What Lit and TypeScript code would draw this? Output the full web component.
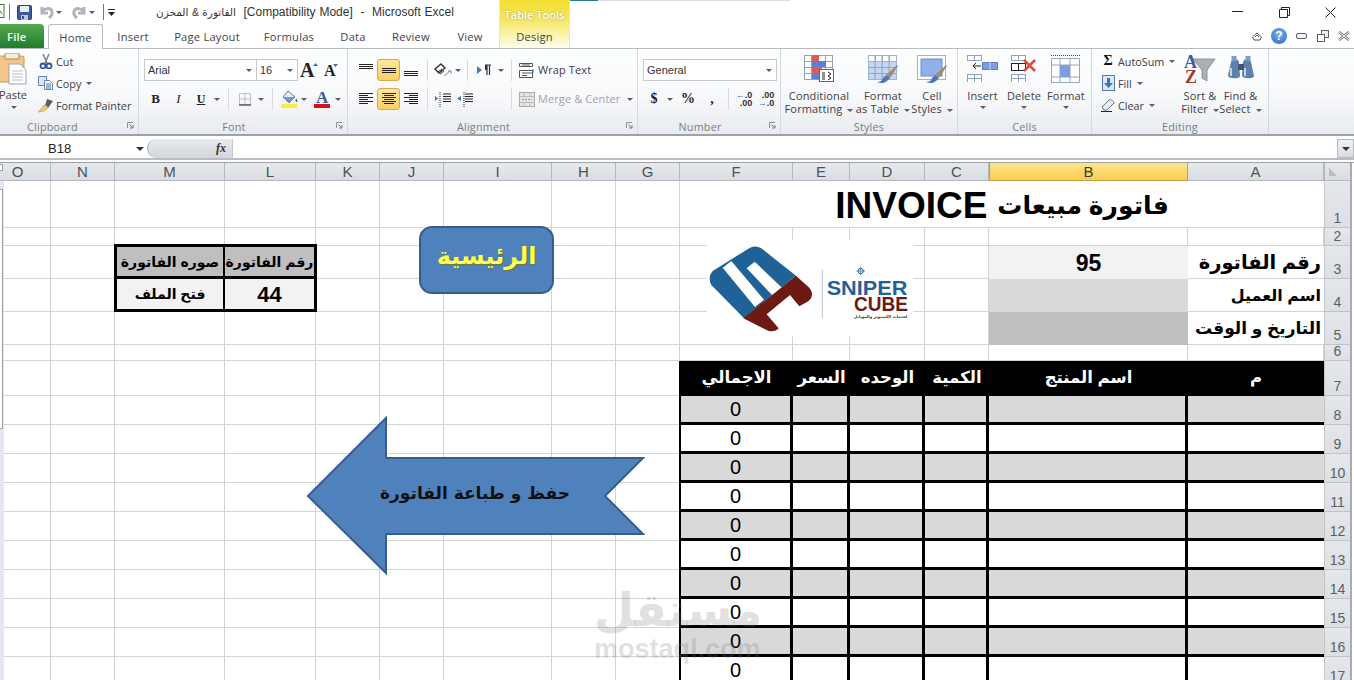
import { LitElement, html, css, svg } from "lit";
import { customElement } from "lit/decorators.js";

const COLS: [string, number][] = [["O",51],["N",64],["M",110],["L",91],["K",64],["J",64],["I",108],["H",64],["G",64],["F",113],["E",57],["D",75],["C",64],["B",199],["A",136]];
const ROWS: number[] = [47,18,33,33,33,16,35,29,29,29,29,29,29,29,29,29,29];
const TABLE = ["F","E","D","C","B","A"];
const HEADS: Record<string,string> = {F:"الاجمالي",E:"السعر",D:"الوحده",C:"الكمية",B:"اسم المنتج",A:"م"};

const ic = (w:number,h:number,body:unknown)=>html`<svg width=${w} height=${h} viewBox="0 0 ${w} ${h}">${body}</svg>`;
const caret = html`<span class="caret"></span>`;
const lines = (ys:number[],xs:[number,number][])=>ys.map((y,i)=>svg`<rect x=${xs[i%xs.length][0]} y=${y} width=${xs[i%xs.length][1]} height="1" fill="#222"/>`);

const grid16 = (x:number,y:number,w:number,h:number,cx:number,cy:number,stroke="#8ea3bc")=>{
  const o:unknown[]=[svg`<rect x=${x+.5} y=${y+.5} width=${w} height=${h} fill="#fff" stroke=${stroke}/>`];
  for(let i=1;i<cx;i++) o.push(svg`<path d="M${x+.5+i*w/cx} ${y}v${h}" stroke=${stroke}/>`);
  for(let i=1;i<cy;i++) o.push(svg`<path d="M${x} ${y+.5+i*h/cy}h${w}" stroke=${stroke}/>`);
  return o;
};
const brush = (dx:number,dy:number)=>svg`<g transform="translate(${dx} ${dy})"><path d="M0 17c3 0 5-1 6-4l3-3 4 3-3 3c-2 2-6 3-10 1z" fill="#4a78b8"/><path d="M9 10L20 0l1 1-8 12z" fill="#a08c70"/></g>`;

const I = {
  excel: ic(6,14,svg`<rect x="-6" y=".5" width="10" height="13" fill="#fff" stroke="#2e7d3c"/><path d="M-2 4l4 6" stroke="#2e7d3c"/>`),
  save: ic(15,15,svg`<rect x=".5" y=".5" width="14" height="14" rx="1" fill="#3d5a9c" stroke="#2a3f78"/><rect x="3" y="1" width="9" height="6" fill="#e8eef8"/><rect x="4" y="10" width="7" height="5" fill="#bcc6d8"/><rect x="5" y="11" width="2" height="3" fill="#34508c"/>`),
  undo: ic(14,14,svg`<path d="M2 2v6h6M2 7.500c2-5 9-5 10-1 .6 2.500-1 5-3 6.500" fill="none" stroke="#aeb5c0" stroke-width="3"/>`),
  redo: ic(14,14,svg`<path d="M12 2v6H6M12 7.500C10 2.500 3 2.500 2 6.500c-.6 2.500 1 5 3 6.500" fill="none" stroke="#aeb5c0" stroke-width="3"/>`),
  custom: ic(8,9,svg`<rect y="1" width="7" height="1" fill="#222"/><path d="M0 4h7L3.500 8z" fill="#222"/>`),
  paste: ic(28,32,svg`<rect x="-4" y="3" width="28" height="26" rx="2" fill="#f3c586" stroke="#c89a5a"/><rect x="5" y="0" width="14" height="6" rx="1" fill="#fbeecf" stroke="#9a8a70"/><path d="M9 11h11l6 6v14H9z" fill="#fff" stroke="#9fa6b0"/><path d="M12 18h11M12 21h11M12 24h11M12 27h11" stroke="#b8bec8"/>`),
  cut: ic(14,15,svg`<path d="M4 0l4 9M10 0L6 9" stroke="#7b8088" stroke-width="1.500"/><circle cx="4" cy="12" r="2.500" fill="none" stroke="#3057a5" stroke-width="1.800"/><circle cx="10" cy="12" r="2.500" fill="none" stroke="#3057a5" stroke-width="1.800"/>`),
  copy: ic(16,14,svg`<path d="M.5 .5h8v9h-8z" fill="#dce8f6" stroke="#5f85b3"/><path d="M6.500 4.500h5l3 3v6h-8z" fill="#fff" stroke="#5f85b3"/><path d="M8 8h5M8 10h5M8 12h5" stroke="#3c6ea8"/>`),
  painter: ic(16,15,svg`<path d="M9 1l6 2-5 7-3-2z" fill="#5a5f68"/><path d="M7 7l3 2c-1 3-5 5-10 5 3-2 4-6 7-7z" fill="#eecb6e" stroke="#b99739" stroke-width=".6"/>`),
  launcher: ic(7,7,svg`<path d="M.5 6V.5H6" fill="none" stroke="#8d939b"/><path d="M2.500 2.500l3 3M6 3v3H3" fill="none" stroke="#717780"/>`),
  grow: ic(18,16,svg`<text x="0" y="15" class="az gr" fill="#222">A</text><path d="M13 4l2.500-3L18 4z" fill="#3f6fa8"/>`),
  shrink: ic(16,14,svg`<text x="1" y="13" class="az shr" fill="#222">A</text><path d="M10 1h5l-2.500 3z" fill="#3f6fa8"/>`),
  bold: html`<b class="fb">B</b>`,
  ital: html`<i class="fi">I</i>`,
  under: html`<span class="fu">U</span>`,
  border: ic(14,14,svg`<path d="M1.500 1.500h11v11h-11zM7 1.500v11M1.500 7h11" fill="none" stroke="#8b8f96" stroke-dasharray="1 1"/><path d="M1 13h12" stroke="#222"/>`),
  fill: ic(18,18,svg`<path d="M8 1l7 6-6 6-6-6z" fill="#e5edf6" stroke="#5a7da6"/><path d="M3 7l6 6 6-6z" fill="#7398c6"/><path d="M16 8c1 2 2 3 1 4s-2-1-1-4z" fill="#4b6a96"/><rect x="1" y="14" width="16" height="4" fill="#f4f03c"/>`),
  color: ic(16,18,svg`<text x="2" y="13" class="az cl" fill="#3b5998">A</text><rect y="14" width="16" height="4" fill="#d3121c"/>`),
  atop: ic(14,20,svg`${lines([4,6,8],[[0,14]])}`),
  amid: ic(14,20,svg`${lines([8,10,12],[[0,14]])}`),
  abot: ic(14,20,svg`${lines([11,13,15],[[0,14]])}`),
  left: ic(14,12,svg`${lines([0,2,4,6,8,10],[[0,14],[0,9]])}`),
  center: ic(14,12,svg`${lines([0,2,4,6,8,10],[[0,14],[2,10]])}`),
  right: ic(14,12,svg`${lines([0,2,4,6,8,10],[[0,14],[5,9]])}`),
  orient: ic(18,15,svg`<path d="M1 6l6-5 4 4-6 5z" fill="none" stroke="#333" stroke-width="1.400"/><path d="M4 9l4-3M6 11l4-3" stroke="#333"/><path d="M10 13l6-5" stroke="#7d8b9c"/><path d="M14 8h3v3" fill="none" stroke="#7d8b9c"/>`),
  rtl: ic(14,12,svg`<path d="M0 2l5 4-5 4z" fill="#4a7cb5"/><path d="M8 1h6M10 1v10M12.500 1v10" stroke="#333" stroke-width="1.200"/><path d="M8 1h2v5H8z" fill="#333"/>`),
  indL: ic(16,16,svg`<path d="M8 3h8M8 5.500h8M8 8h8M8 10.500h8" stroke="#222"/><path d="M5 1v15" stroke="#222" stroke-dasharray="1 1"/><path d="M0 5l3 2.500L0 10z" fill="#3b76bd"/>`),
  indR: ic(16,16,svg`<path d="M8 3h8M8 5.500h8M8 8h8M8 10.500h8" stroke="#222"/><path d="M7 1v15" stroke="#222" stroke-dasharray="1 1"/><path d="M4 5L0 7.500 4 10z" fill="#3b76bd"/>`),
  wrap: ic(16,15,svg`<path d="M.5 .5h13v3H.5zM.5 7.500h13v7H.5z" fill="#fff" stroke="#555"/><path d="M3 2h8M3 10h8M3 12.500h5" stroke="#555"/><path d="M14 6v4h-3" fill="none" stroke="#3c6ea8"/>`),
  merge: ic(16,15,svg`<rect x=".5" y=".5" width="15" height="14" fill="#e6e6e6" stroke="#aaa"/><path d="M.5 4.500h15M.5 10.500h15M5 .5v4M11 .5v4M5 10.500v4M11 10.500v4" stroke="#bbb"/><path d="M3 7.500h10" stroke="#999" stroke-dasharray="2 1"/>`),
  dec1: html`<span class="dec"><span><span class="arrow">←</span>.0</span><span>.00</span></span>`,
  dec2: html`<span class="dec"><span>.00</span><span><span class="arrow">→</span>.0</span></span>`,
  cond: ic(30,27,svg`${grid16(0,0,28,24,4,4)}<rect x="8" y="0" width="7" height="6" fill="#e45a50"/><rect x="8" y="6" width="14" height="6" fill="#5b80d8"/><rect x="8" y="12" width="10" height="6" fill="#e45a50"/><rect x="8" y="18" width="7" height="6" fill="#5b80d8"/><rect x="15.500" y="14.500" width="14" height="12" fill="#fff" stroke="#666"/><path d="M18 18h3M18 20h3M18 22h3M18 24h3M24 17l3 2-3 2M24 21l3 2-3 2" stroke="#222" fill="none"/>`),
  table: ic(30,30,svg`${grid16(0,0,28,24,4,4,"#9db4d2")}<rect x="1" y="7" width="27" height="17" fill="#b9cdf0" opacity=".8"/><path d="M7 .5v24M14 .5v24M21 .5v24M0 12.500h28M0 18.500h28" stroke="#8fa6c6"/>${brush(9,10)}`),
  cstyle: ic(30,30,svg`<rect x=".5" y=".5" width="28" height="24" fill="#fff" stroke="#9db4d2"/><rect x="4" y="4" width="21" height="17" fill="#8fb0ea" stroke="#6d8fd0"/>${brush(9,10)}`),
  ins: ic(31,27,svg`${grid16(0,0,14,5,2,1)}${grid16(0,19,14,8,2,2)}<rect x="15.500" y="7.500" width="15" height="7" fill="#7b9de0" stroke="#5f7fbf"/><path d="M23 7v8" stroke="#c9d6ef"/><path d="M6 11h8M6 11l3-3M6 11l3 3" stroke="#222" fill="none"/>`),
  del: ic(26,27,svg`${grid16(0,0,14,5,2,1)}${grid16(0,8,14,7,2,1,"#222")}${grid16(0,19,14,8,2,2)}<path d="M13 5l11 11M24 5L13 16" stroke="#e04a38" stroke-width="2.500"/>`),
  fmt: ic(30,30,svg`<path d="M0 .5h30" stroke="#444" stroke-dasharray="1 1"/><path d="M.5 3.500h28v24h-28z" fill="#fff" stroke="#9aa6b2"/><path d="M9 3v25M19 3v25M0 10h28M0 22h28" stroke="#9aa6b2"/><rect x="9" y="10" width="10" height="12" fill="#7d9fe2"/>`),
  sigma: html`<span class="sig">Σ</span>`,
  fillI: ic(13,16,svg`<rect x=".5" y=".5" width="12" height="15" fill="#dbe8f8" stroke="#4f7cb5"/><path d="M5 3h3v5h3l-4.500 5L2 8h3z" fill="#3f74c0"/>`),
  clear: ic(15,14,svg`<path d="M1 9l7-7c2-1 5 1 5 3l-7 7H3z" fill="#e8edf2" stroke="#6a7480"/><path d="M0 13.500h11" stroke="#222"/>`),
  sort: ic(32,28,svg`<path d="M9 4h22l-8 11v11l-5-3v-8z" fill="#aab0b6" stroke="#8d9298"/><text x="0" y="13" class="az so" fill="#3a5ea8">A</text><text x="1" y="28" class="az so" fill="#a03a2a">Z</text>`),
  find: ic(28,26,svg`<path d="M4 7c1-4 7-4 8 0l1 14c0 3-11 3-12 0z" fill="#5e80ad"/><path d="M16 7c1-4 7-4 8 0l3 14c0 3-11 3-12 0z" fill="#5e80ad"/><rect x="11" y="9" width="6" height="6" fill="#3b5782"/><rect x="4.500" y="1" width="5" height="5" fill="#7f9cc2"/><rect x="18.500" y="1" width="5" height="5" fill="#7f9cc2"/><path d="M4 13v8M18 13v8" stroke="#c8d6e8" stroke-width="2"/>`),
  chev: ic(10,9,svg`<path d="M.5 5L5 1l4.500 4-1.500 3H2z" fill="none" stroke="#555"/><path d="M3 5l2-2 2 2" fill="none" stroke="#555"/>`),
  help: html`<span class="help">?</span>`,
  wmin: ic(11,6,svg`<rect x=".5" y=".5" width="10" height="5" rx="1.500" fill="#f5f6f8" stroke="#56606c"/>`),
  wres: ic(12,12,svg`<rect x="4.500" y=".5" width="7" height="7" fill="#eef1f5" stroke="#56606c"/><rect x=".5" y="4.500" width="7" height="7" fill="#fff" stroke="#56606c"/>`),
  wcls: ic(12,10,svg`<path d="M1 1l10 8M11 1L1 9" stroke="#6a737d" stroke-width="2.600"/><path d="M1 1l10 8M11 1L1 9" stroke="#fff"/>`),
};

const logo = html`<svg width="220" height="105" viewBox="0 0 660 315">
  <rect width="620" height="290" x="20" y="15" fill="#fff"/>
  <path d="M38 108L150 38q18-8 34 2l104 82-156 128L34 150q-12-24 4-42z" fill="#1f6297"/>
  <path d="M68 98l26-20 98 116-27 22zM140 100l24-20 82 78-30 22z" fill="#fff"/>
  <path d="M288 122l40 36q18 22-2 40l-28 16-28-34-70 58 36 42q-10 12-30 8l-76-38z" fill="#6d1a12"/>
  <path d="M367 105v145" stroke="#8ea8c0" stroke-width="2"/>
  <text x="380" y="180" class="lg" fill="#1f6297" textLength="242" lengthAdjust="spacingAndGlyphs">SNIPER</text>
  <text x="462" y="228" class="lg" fill="#6d1a12" textLength="162" lengthAdjust="spacingAndGlyphs">CUBE</text>
  <text x="622" y="250" class="lgs" text-anchor="end" fill="#333">لخدمات الكمبيوتر والموبايل</text>
  <circle cx="482" cy="108" r="8" fill="none" stroke="#1f6297" stroke-width="3"/><path d="M482 95v26M469 108h26" stroke="#1f6297" stroke-width="2"/>
</svg>`;

@customElement("app-root")
export class AppRoot extends LitElement {
  static styles = css`
    :host{display:block;width:1354px;height:680px;overflow:hidden;position:relative;background:#fff;font-family:"Open Sans","Liberation Sans",sans-serif;font-size:11px;color:#3c4046}
    *{box-sizing:border-box}
    .title{height:24px;display:grid;grid-template-columns:6px 6px 24px 4px 14px 10px 8px 14px 12px 10px 8px 40px 1fr;align-items:center;position:relative}
    .qsep{width:1px;height:16px;background:#777;justify-self:center}
    .qc{display:flex;justify-content:center}
    .ttl{font-family:"Liberation Sans","DejaVu Sans",sans-serif;font-size:12px;color:#333;white-space:pre;word-spacing:.5px}
    .ttl .ar{font-size:10.500px}
    .wbtns{position:absolute;right:0;top:0;height:24px;display:grid;grid-template-columns:46px 46px 46px;width:139px;align-items:center;justify-items:center}
    .tabs{height:25px;display:grid;grid-template-columns:44px 4px 55px 60px 88px 76px 52px 64px 54px 1fr;align-items:center;border-bottom:1px solid #b8bcc2;position:relative;font-size:11.200px;letter-spacing:.2px}
    .tab{text-align:center;color:#444}
    .file{background:linear-gradient(#56a84e,#1f7d2d);color:#fff;height:24px;display:flex;align-items:center;padding-left:7px;border-radius:0 4px 0 0;align-self:end;font-weight:600}
    .home{grid-column:3;align-self:end;background:linear-gradient(#fff,#fcfdfe);border:1px solid #b8bcc2;border-bottom:none;border-radius:3px 3px 0 0;display:flex;align-items:center;justify-content:center;margin-bottom:-1px;position:relative;z-index:2;height:25px}
    .ctx{position:absolute;left:499px;top:0;width:71px;height:48px;background:linear-gradient(#f1de2c 0,#f5e86c 45%,#fffef0 100%);text-align:center;font-size:11px;border-left:1px solid #e9e6c0;border-right:1px solid #e9e6c0}
    .ctx .tt{display:block;margin-top:7px;color:#fff;font-weight:600;text-shadow:0 0 2px #9c9a50}
    .ctx .ds{display:block;margin-top:7px;color:#444;letter-spacing:.2px;font-size:11.200px}
    .strip{position:absolute;left:550px;top:0;width:240px;height:1px;background:linear-gradient(90deg,#2a7a90 0 20%,#dcdfe3 20%)}
    .wb2{position:absolute;right:0;top:2px;height:20px;width:109px;display:grid;grid-template-columns:23px 22px 22px 22px 20px;align-items:center;justify-items:center}
    .help{width:16px;height:16px;border-radius:50%;background:radial-gradient(circle at 50% 35%,#7fb0ec,#2a68c0);color:#fff;font:bold 12px "Liberation Sans",sans-serif;display:flex;align-items:center;justify-content:center}
    .ribbon{height:87px;display:flex;background:linear-gradient(#fdfefe 0,#f8f9fb 55%,#e8ebef 100%);border-bottom:2px solid #9ea2a7}
    .g{position:relative;border-right:1px solid #d5d8dc;display:flex;flex-direction:column;flex:none}
    .gb{flex:1;min-height:0}
    .gl{height:16px;display:flex;align-items:center;justify-content:center;color:#777d85;position:relative;letter-spacing:.2px;font-size:10.800px}
    .gl svg{position:absolute;right:4px;top:4px}
    .pl18{padding-right:18px}
    .pl33{padding-right:33px}
    .g1{width:139px}.g2{width:209px}.g3{width:290px}.g4{width:143px}.g5{width:177px}.g6{width:134px}.g7{width:177px;}
    .clip{display:grid;grid-template-columns:38px 100px;height:100%}
    .pst{display:flex;flex-direction:column;align-items:center;padding-top:4px;width:28px}
    .pst .t{margin-top:2px;margin-left:-2px}.pst .caret{margin-top:4px}
    .stack{display:flex;flex-direction:column;padding-top:1px}
    .sm{height:22px;display:flex;align-items:center;gap:2px;white-space:nowrap;font-size:10.800px}
    .sm .i{width:16px;display:flex;justify-content:center;flex:none}
    .sm .caret{margin-left:3px}
    .lines{padding-top:10px;display:flex;flex-direction:column;gap:7px}
    .row{height:22px;display:grid;align-items:center;justify-items:center}
    .r-font1{display:flex;margin-left:5px;align-items:center;height:22px}
    .combo{height:22px;border:1px solid #c6cacf;background:#fff;display:flex;align-items:center;justify-content:space-between;padding:0 4px 0 3px;color:#333;font:11px "Liberation Sans",sans-serif}
    .c1{width:113px}.c2{width:42px;margin-left:-1px}.c3{width:134px}
    .gs{width:22px;display:flex;justify-content:center}
    .r-font2{margin-left:5px;grid-template-columns:23px 23px 22px 10px 12px 22px 10px 12px 21px 10px 2px 22px 9px}
    .r-al1{margin-left:7px;grid-template-columns:22px 23px 22px 10px 22px 8px 10px 24px 10px 10px auto}
    .r-al2{margin-left:7px;grid-template-columns:22px 23px 22px 10px 22px 22px 30px 10px auto}
    .r-nm{margin-left:5px;grid-template-columns:22px 10px 2px 22px 2px 22px 10px 22px 22px}
    .sep{width:1px;height:22px;background:#d8dbdf}
    .hl{width:23px;height:22px;border:1px solid #d9a84a;border-radius:3px;background:linear-gradient(#ffe79a,#fdd065);display:flex;align-items:center;justify-content:center}
    .big-row{display:grid;height:100%}
    .big-s{margin-left:5px;grid-template-columns:66px 62px 36px}
    .big-c{margin-left:4px;grid-template-columns:41px 42px 42px}
    .big-e{margin-left:8px;grid-template-columns:80px 40px 41px}
    .big{display:flex;flex-direction:column;align-items:center;text-align:center;white-space:nowrap;line-height:13px;letter-spacing:.15px}
    .big .ico{height:40px;padding-top:6px;display:flex;align-items:flex-start;justify-content:center}
    .big .caret{margin-left:2px;vertical-align:middle}
    .big .caret.solo{display:block;margin:4px auto 0}
    .caret{display:inline-block;width:0;height:0;border-left:3px solid transparent;border-right:3px solid transparent;border-top:3px solid #5a5f66}
    .wt{display:flex;align-items:center;gap:3px;justify-self:start;white-space:nowrap;letter-spacing:.1px;margin-left:3px}
    .tx{padding-bottom:2px}
    .wt .caret{margin-left:4px}
    .dis{color:#a0a4a9}
    .fb{font:bold 13px "Liberation Serif",serif;color:#222}
    .fi{font:italic 13px "Liberation Serif",serif;color:#222}
    .fu{font:bold 12px "Liberation Serif",serif;color:#222;text-decoration:underline}
    .sym{font:bold 14px "Liberation Serif",serif;color:#222}
    .dec{font:bold 9px/8px "Liberation Sans",sans-serif;color:#333;display:flex;flex-direction:column;align-items:flex-end;white-space:nowrap}
    .dec .arrow{color:#3b76bd;font-size:9px}
    .sig{font:bold 14px "Liberation Serif",serif;color:#111}
    .az{font:bold 15px "Liberation Serif",serif}
    .gr{font-size:20px}.shr{font-size:16px}.cl{font-size:17px}.so{font-size:18px}
    .lg{font:bold 62px "Liberation Sans",sans-serif}
    .lgs{font:bold 12px "DejaVu Sans",sans-serif}
    .fbar{height:21px;margin-top:3px;display:grid;grid-template-columns:147px 86px 1fr 17px;background:#fff;border-bottom:2px solid #b9bcc1}
    .nm{display:flex;align-items:center;justify-content:space-between;padding:0 3px 0 48px;font:13px "Liberation Sans",sans-serif;color:#222}
    .nm .caret{border-left-width:4px;border-right-width:4px;border-top:4px solid #333}
    .pill{background:linear-gradient(#e8eaee,#d3d6db);border-radius:12px 0 0 12px;border-left:1px solid #aab;display:flex;align-items:center;justify-content:flex-end;padding-right:6px;font:italic bold 12px "Liberation Serif",serif;color:#333;border-right:1px solid #c4c7cc}
    .fi2{background:#fff}
    .fd{background:linear-gradient(#eff1f4,#d9dce1);border:1px solid #b7bbc1;display:flex;align-items:center;justify-content:center}
    .fd .caret{border-left-width:4px;border-right-width:4px;border-top:4px solid #333}
    .sheet{margin-top:2px;display:grid;grid-template-columns:51px 64px 110px 91px 64px 64px 108px 64px 64px 113px 57px 75px 64px 199px 136px 26px 4px;grid-template-rows:18px 47px 18px 33px 33px 33px 16px 35px repeat(10,29px);font-family:"Liberation Sans","DejaVu Sans",sans-serif;color:#000;border-top:1px solid #9ea2a7}
    .ch{background:linear-gradient(#e6e9ed,#d9dde2);border-right:1px solid #b4b8be;border-bottom:1px solid #b4b8be;display:flex;align-items:center;justify-content:center;font-size:15px;color:#4c5259}
    .ch.first{padding-right:15px}
    .ch.sel{background:linear-gradient(#fde58c,#fbcc4f);border:1px solid #c39e48;border-top:none;color:#3a3a30}
    .rh{background:linear-gradient(#e4e7eb,#dcdfe4);border-bottom:1px solid #bfc3c8;border-left:1px solid #c3c7cc;display:flex;align-items:flex-end;justify-content:center;font-size:14px;color:#5a6067;line-height:17px}
    .corner{background:linear-gradient(#e4e7eb,#d9dce1);border-left:1px solid #b4b8be;border-bottom:1px solid #b4b8be;padding:5px 0 0 4px}
    .corner i{display:block;width:0;height:0;border-left:8px solid #b9bdc3;border-top:8px solid transparent}
    .gut{background:#fff;border-left:2px solid #a8acb2}
    .c{border-right:1px solid #d4d4d4;border-bottom:1px solid #d4d4d4;display:flex;align-items:center;justify-content:center;min-width:0;overflow:hidden;white-space:nowrap}
    .merged{grid-column:span 6;border-right:none;font-weight:bold;font-size:37px;line-height:1;gap:10px;justify-content:center;padding-top:2px;direction:rtl}
    .merged .ar{font-size:25px}
    .lb{justify-content:flex-end;font-weight:bold;font-size:17px;padding-right:3px;border-right:none}
    .lb.r3{font-size:19.500px}.lb.r4{font-size:16px}
    .g3c{background:#f2f2f2;font-weight:bold;font-size:23px;border:none;padding-top:1px}
    .g4c{background:#d9d9d9;border:none}
    .g5c{background:#bfbfbf;border:none}
    .sh{font-weight:bold;font-size:14px;margin-top:-2px;margin-right:-1px;border-top:3px solid #000;border-bottom:3px solid #000;border-right:3px solid #000;background:#bfbfbf;position:relative}
    .sb{font-weight:bold;margin-right:-1px;border-bottom:3px solid #000;border-right:3px solid #000;background:#f2f2f2;position:relative}
    .sl{border-left:3px solid #000;margin-left:-1px}
    .sb.n{font-size:22px;padding-top:2px}.sb.t{font-size:14px}
    .th{background:#000;color:#fff;font-weight:bold;font-size:16.500px;border:none;padding-bottom:2px}
    .th.first{box-shadow:-1px 0 0 #000}
    .d{border-bottom:3px solid #000;border-right:3px solid #000;font-size:20px;padding-top:1px}
    .d.l{border-left:2px solid #000;margin-left:-1px}
    .d.g{background:#d9d9d9}
    .d.a{border-right:none}
    .rail{position:absolute;left:0;top:181px;width:4px;height:499px;background:#e3e8f0}
    .thumb{position:absolute;left:0;top:8px;width:3px;height:240px;background:#fff;border:1px solid #98a0aa;border-left:none}
    .cbox{position:absolute;left:0;top:164px;width:3px;height:7px;background:#fff;border:1px solid #98a0aa;border-left:none}
    .logo{position:absolute;left:700px;top:235px;width:220px;height:105px}
    .home-btn{position:absolute;left:419px;top:226px;width:135px;height:68px;border:2px solid #385d8a;border-radius:13px;background:#4f81bd;display:flex;align-items:center;justify-content:center;font:bold 24px "DejaVu Sans",sans-serif;color:#ffff55;text-shadow:1px 1px 1px #6a7a30;padding-bottom:8px}
    .arrow-shape{position:absolute;left:300px;top:410px;width:350px;height:170px}
    .arrow-t{position:absolute;left:379px;top:483px;width:192px;text-align:center;font:bold 17px "DejaVu Sans",sans-serif;color:#111;white-space:nowrap}
    .wm{position:absolute;left:594px;top:582px;width:166px;color:rgba(120,120,120,.24);text-align:center;pointer-events:none}
    .wm .a{display:block;font:bold 46px/56px "DejaVu Sans",sans-serif;white-space:nowrap}
    .wm .b{display:block;font:bold 27px/22px "Liberation Sans",sans-serif;white-space:nowrap}
  `;

  private cell(col:string,r:number){
    const b = r-1;
    if(r===1){
      if(TABLE.includes(col)){
        return col==="F"?html`<div class="c merged"><span class="ar">فاتورة مبيعات</span><span>INVOICE</span></div>`:"";
      }
      return html`<div class="c"></div>`;
    }
    if(r===3&&col==="M") return html`<div class="c sh sl">صوره الفاتورة</div>`;
    if(r===3&&col==="L") return html`<div class="c sh">رقم الفاتورة</div>`;
    if(r===4&&col==="M") return html`<div class="c sb sl t">فتح الملف</div>`;
    if(r===4&&col==="L") return html`<div class="c sb n">44</div>`;
    if(r===3&&col==="B") return html`<div class="c g3c">95</div>`;
    if(r===4&&col==="B") return html`<div class="c g4c"></div>`;
    if(r===5&&col==="B") return html`<div class="c g5c"></div>`;
    if(col==="A"&&r===3) return html`<div class="c lb r3">رقم الفاتورة</div>`;
    if(col==="A"&&r===4) return html`<div class="c lb r4">اسم العميل</div>`;
    if(col==="A"&&r===5) return html`<div class="c lb">التاريخ و الوقت</div>`;
    if(r===7&&TABLE.includes(col)) return html`<div class="c th ${col==="F"?"first":""}">${HEADS[col]}</div>`;
    if(r>=8&&TABLE.includes(col)){
      const cls = `c d ${b%2===1?"g":""} ${col==="F"?"l":""} ${col==="A"?"a":""}`;
      return html`<div class=${cls}>${col==="F"?"0":""}</div>`;
    }
    return html`<div class="c"></div>`;
  }

  private big(icon:unknown,l1:string,l2:string,solo=false){
    return html`<div class="big"><div class="ico">${icon}</div><span>${l1}</span>${solo?html`<span class="caret solo"></span>`:html`<span>${l2} ${caret}</span>`}</div>`;
  }

  render(){
    const sep = html`<span class="sep"></span>`;
    return html`
      <div class="title">
        <span>${I.excel}</span><span class="qsep"></span><span class="qc">${I.save}</span><span></span>
        <span class="qc">${I.undo}</span><span class="qc">${caret}</span><span></span>
        <span class="qc">${I.redo}</span><span class="qc">${caret}</span>
        <span class="qsep"></span><span class="qc">${I.custom}</span><span></span>
        <span class="ttl"><span class="ar">الفاتورة &amp; المخزن</span>  [Compatibility Mode]  -  Microsoft Excel</span>
      </div>
      <div class="strip"></div>
      <div class="wbtns">
        <svg width="12" height="2"><rect width="11" height="1" fill="#222"/></svg>
        <svg width="11" height="11"><path d="M.5 2.500h8v8h-8zM2.500 2.500v-2h8v8h-2" fill="none" stroke="#222"/></svg>
        <svg width="11" height="11"><path d="M.5 .5l10 10M10.500 .5l-10 10" stroke="#222"/></svg>
      </div>
      <div class="ctx"><span class="tt">Table Tools</span><span class="ds">Design</span></div>
      <div class="tabs">
        <div class="file">File</div><span></span>
        <div class="home tab">Home</div>
        <div class="tab">Insert</div><div class="tab">Page Layout</div><div class="tab">Formulas</div><div class="tab">Data</div><div class="tab">Review</div><div class="tab">View</div>
        <div class="wb2">${I.chev}${I.help}${I.wmin}${I.wres}${I.wcls}</div>
      </div>
      <div class="ribbon">
        <div class="g g1"><div class="gb clip">
          <div class="pst">${I.paste}<span class="t">Paste</span>${caret}</div>
          <div class="stack">
            <div class="sm"><span class="i">${I.cut}</span>Cut</div>
            <div class="sm"><span class="i">${I.copy}</span>Copy ${caret}</div>
            <div class="sm"><span class="i">${I.painter}</span>Format Painter</div>
          </div></div>
          <div class="gl pl33">Clipboard ${I.launcher}</div></div>
        <div class="g g2"><div class="gb lines">
          <div class="r-font1"><div class="combo c1">Arial ${caret}</div><div class="combo c2">16 ${caret}</div><span class="gs">${I.grow}</span><span class="gs">${I.shrink}</span></div>
          <div class="row r-font2">${I.bold}${I.ital}${I.under}${caret}${sep}${I.border}${caret}${sep}${I.fill}${caret}<span></span>${I.color}${caret}</div>
          </div><div class="gl pl18">Font ${I.launcher}</div></div>
        <div class="g g3"><div class="gb lines">
          <div class="row r-al1">${I.atop}<span class="hl">${I.amid}</span>${I.abot}${sep}${I.orient}${caret}${sep}${I.rtl}${caret}${sep}<span class="wt">${I.wrap}<span class="tx">Wrap Text</span></span></div>
          <div class="row r-al2">${I.left}<span class="hl">${I.center}</span>${I.right}${sep}${I.indL}${I.indR}<span></span>${sep}<span class="wt dis">${I.merge}<span class="tx">Merge &amp; Center</span>${caret}</span></div>
          </div><div class="gl pl18">Alignment ${I.launcher}</div></div>
        <div class="g g4"><div class="gb lines">
          <div class="r-font1"><div class="combo c3">General ${caret}</div></div>
          <div class="row r-nm"><span class="sym">$</span>${caret}<span></span><span class="sym">%</span><span></span><span class="sym">,</span>${sep}${I.dec1}${I.dec2}</div>
          </div><div class="gl pl18">Number ${I.launcher}</div></div>
        <div class="g g5"><div class="gb big-row big-s">
          ${this.big(I.cond,"Conditional","Formatting")}${this.big(I.table,"Format","as Table")}${this.big(I.cstyle,"Cell","Styles")}
          </div><div class="gl">Styles</div></div>
        <div class="g g6"><div class="gb big-row big-c">
          ${this.big(I.ins,"Insert","",true)}${this.big(I.del,"Delete","",true)}${this.big(I.fmt,"Format","",true)}
          </div><div class="gl">Cells</div></div>
        <div class="g g7"><div class="gb big-row big-e">
          <div class="stack">
            <div class="sm"><span class="i">${I.sigma}</span>AutoSum ${caret}</div>
            <div class="sm"><span class="i">${I.fillI}</span>Fill ${caret}</div>
            <div class="sm"><span class="i">${I.clear}</span>Clear ${caret}</div>
          </div>
          ${this.big(I.sort,"Sort &","Filter")}${this.big(I.find,"Find &","Select")}
          </div><div class="gl">Editing</div></div>
      </div>
      <div class="fbar">
        <div class="nm">B18 <span class="caret"></span></div>
        <div class="pill">fx</div>
        <div class="fi2"></div>
        <div class="fd"><span class="caret"></span></div>
      </div>
      <div class="sheet">
        ${COLS.map(([c],i)=>html`<div class="ch ${c==="B"?"sel":""} ${i===0?"first":""}">${c}</div>`)}
        <div class="corner"><i></i></div><div class="gut"></div>
        ${ROWS.map((_,i)=>html`
          ${COLS.map(([c])=>this.cell(c,i+1))}
          <div class="rh">${i+1}</div><div class="gut"></div>`)}
      </div>
      <div class="cbox"></div>
      <div class="rail"><div class="thumb"></div></div>
      <div class="logo">${logo}</div>
      <div class="home-btn">الرئيسية</div>
      <svg class="arrow-shape" viewBox="300 410 350 170"><path d="M308 496L386 418V458H643L605 496L643 534H386V573Z" fill="#4f81bd" stroke="#385d8a" stroke-width="2"/></svg>
      <div class="arrow-t">حفظ و طباعة الفاتورة</div>
      <div class="wm"><span class="a">مستقل</span><span class="b">mostaql.com</span></div>
    `;
  }
}
